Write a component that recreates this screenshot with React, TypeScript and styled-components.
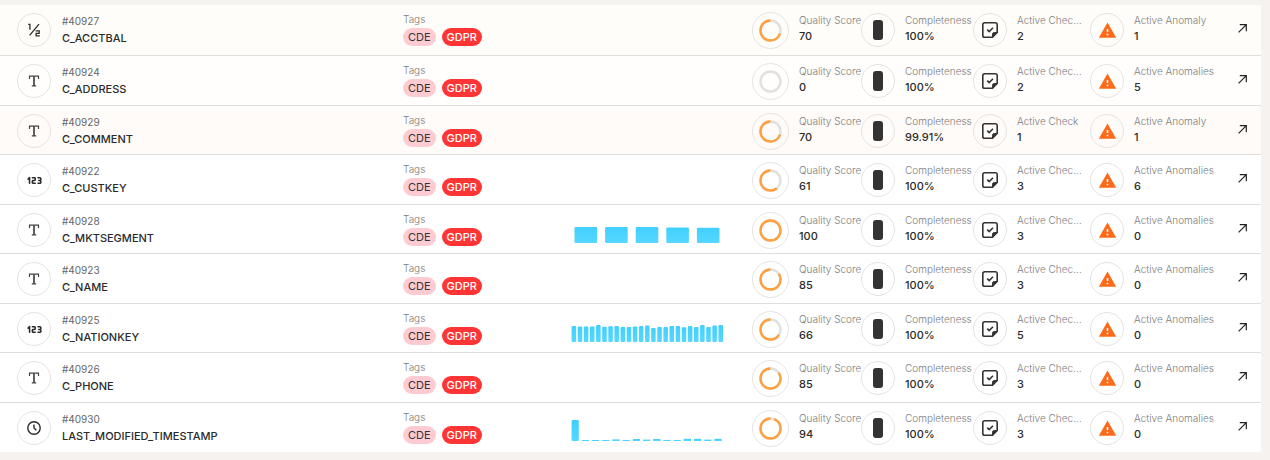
import React from 'react';
import styled, { createGlobalStyle } from 'styled-components';
import { MdWarning } from 'react-icons/md';
import { TbNumber123 } from 'react-icons/tb';

type FieldType = 'decimal' | 'text' | 'integer' | 'time';

interface Field {
  id: number;
  name: string;
  type: FieldType;
  quality: number;
  completeness: string;
  checks: number;
  anomalies: number;
  tint?: string;
  bars?: number[];
}

const fields: Field[] = [
  { id: 40927, name: 'C_ACCTBAL', type: 'decimal', quality: 70, completeness: '100%', checks: 2, anomalies: 1, tint: '#fffdf9' },
  { id: 40924, name: 'C_ADDRESS', type: 'text', quality: 0, completeness: '100%', checks: 2, anomalies: 5, tint: '#fffefc' },
  { id: 40929, name: 'C_COMMENT', type: 'text', quality: 70, completeness: '99.91%', checks: 1, anomalies: 1, tint: '#fffbf8' },
  { id: 40922, name: 'C_CUSTKEY', type: 'integer', quality: 61, completeness: '100%', checks: 3, anomalies: 6 },
  { id: 40928, name: 'C_MKTSEGMENT', type: 'text', quality: 100, completeness: '100%', checks: 3, anomalies: 0, bars: [16, 16, 16, 15.6, 15.2] },
  { id: 40923, name: 'C_NAME', type: 'text', quality: 85, completeness: '100%', checks: 3, anomalies: 0 },
  {
    id: 40925, name: 'C_NATIONKEY', type: 'integer', quality: 66, completeness: '100%', checks: 5, anomalies: 0,
    bars: [16, 15.4, 15.6, 15.6, 17, 15.2, 15.8, 16, 15, 15, 15.6, 16, 16.6, 14, 15, 15, 16, 16, 14.8, 16, 15, 17, 15, 16.4, 17],
  },
  { id: 40926, name: 'C_PHONE', type: 'text', quality: 85, completeness: '100%', checks: 3, anomalies: 0 },
  {
    id: 40930, name: 'LAST_MODIFIED_TIMESTAMP', type: 'time', quality: 94, completeness: '100%', checks: 3, anomalies: 0,
    bars: [21, 1, 1, 1, 1.6, 1, 2, 1.4, 2, 1, 1, 2.2, 2.2, 1.4, 2.2],
  },
];

const GlobalStyle = createGlobalStyle`
  *, *::before, *::after { box-sizing: border-box; }
  body {
    margin: 0;
    background: #f6f2ef;
    color: #2b2b2b;
    font-family: Inter, "Liberation Sans", sans-serif;
  }
`;

const Page = styled.main`
  padding: 5px 9px 8px 0;
`;

const FieldList = styled.ul`
  margin: 0;
  padding: 0;
  list-style: none;
  overflow: hidden;
  border-radius: 0 3px 3px 0;
  background: #fff;
`;

const FieldRow = styled.li<{ $tint?: string }>`
  display: grid;
  grid-template-columns: minmax(230px, 1fr) 168px 181px 109px 112px 117px 143px 19px;
  align-items: start;
  min-height: 49px;
  padding: 7px 9px 0 17px;
  border-bottom: 1px solid #dedede;
  background: ${({ $tint }) => $tint ?? '#fff'};

  &:nth-child(even) { min-height: 50px; }
  &:first-child { min-height: 51px; }
  &:last-child { border-bottom: 0; }
`;

const Identity = styled.div`
  display: flex;
  gap: 11px;
`;

const Circle = styled.span<{ $large?: boolean }>`
  display: flex;
  flex: none;
  align-items: center;
  justify-content: center;
  width: ${({ $large }) => ($large ? 37 : 34)}px;
  height: ${({ $large }) => ($large ? 37 : 34)}px;
  margin-top: ${({ $large }) => ($large ? 0 : 1)}px;
  border: 1px solid #e5e3e2;
  border-radius: 50%;
`;

const IdentityText = styled.div`
  padding-top: 1px;
`;

const FieldId = styled.div`
  color: #666;
  font-size: 10px;
  line-height: 16px;
`;

const FieldName = styled.div`
  font-size: 11px;
  font-weight: 500;
  line-height: 18px;
  white-space: nowrap;
`;

const MetricLabel = styled.div`
  overflow: hidden;
  color: #7c7c7c;
  font-size: 10px;
  font-weight: 300;
  line-height: 14px;
  text-overflow: ellipsis;
  white-space: nowrap;
`;

const TagList = styled.div`
  display: flex;
  gap: 6px;
  padding-top: 2px;
`;

const Tag = styled.span<{ $strong?: boolean }>`
  padding: 0 5px;
  border-radius: 9px;
  background: ${({ $strong }) => ($strong ? '#ff3434' : '#ffcbd2')};
  color: ${({ $strong }) => ($strong ? '#fff' : '#333')};
  font-size: 11px;
  font-weight: ${({ $strong }) => ($strong ? 500 : 400)};
  line-height: 18px;
`;

const Chart = styled.svg`
  display: block;
  width: 152px;
  height: 24px;
  margin-top: 7px;
`;

const Metric = styled.div`
  display: flex;
  gap: 10px;
`;

const MetricText = styled.div<{ $width: number }>`
  width: ${({ $width }) => $width}px;
  padding-top: 1px;
`;

const MetricValue = styled.div`
  font-size: 11px;
  font-weight: 500;
  line-height: 18px;
`;

const Fill = styled.span`
  width: 10px;
  height: 20px;
  border-radius: 3px;
  background: #333;
`;

const OpenLink = styled.a`
  display: flex;
  justify-content: center;
  padding: 12px 0;
  color: #222;
`;

function TypeIcon({ type }: { type: FieldType }) {
  if (type === 'text') {
    return (
      <svg width="12" height="12" viewBox="0 0 12 12" fill="none" stroke="#444" strokeWidth="1.2">
        <path d="M1.5 4V1.2h9V4M3.8 10.9h4.4" />
        <path d="M6 1.2v9.7" strokeWidth="1.7" />
      </svg>
    );
  }
  if (type === 'integer') return <TbNumber123 size={17} strokeWidth={2.2} />;
  if (type === 'time') {
    return (
      <svg width="14" height="14" viewBox="0 0 14 14" fill="none" stroke="currentColor" strokeWidth="1.4">
        <circle cx="7" cy="7" r="6.2" />
        <path d="M7 3.5V7l2.3 2.3" />
      </svg>
    );
  }
  return (
    <svg width="14" height="16" viewBox="0 0 14 16" fill="none" stroke="currentColor" strokeWidth="1.3">
      <path d="M1.2 2.4h1.7v5.4M12 2.2 2.6 13.4M8.6 8.8h3.6v2.5H9.1v2.6h3.7" />
    </svg>
  );
}

function ScoreRing({ value }: { value: number }) {
  return (
    <svg width="23" height="23" viewBox="0 0 23 23" fill="none" strokeWidth="2.4">
      <circle cx="11.5" cy="11.5" r="10" stroke="#e2e0df" />
      {value > 0 && (
        <circle
          cx="11.5"
          cy="11.5"
          r="10"
          stroke="#ffa040"
          pathLength={100}
          strokeDasharray={`${value} ${100 - value}`}
          transform="matrix(0 -1 -1 0 23 23)"
        />
      )}
    </svg>
  );
}

function CheckNoteIcon() {
  return (
    <svg width="16" height="16" viewBox="0 0 16 16" fill="none" stroke="#333" strokeWidth="1.6">
      <path d="M10.5 15.2H2.6A1.8 1.8 0 0 1 .8 13.4V2.6A1.8 1.8 0 0 1 2.6.8h10.8a1.8 1.8 0 0 1 1.8 1.8v7.9z" />
      <path d="M10.5 15.2v-2.9a1.8 1.8 0 0 1 1.8-1.8h2.9z" fill="#333" strokeWidth="1" />
      <path d="m5.2 7.6 2 2 3.8-3.8" />
    </svg>
  );
}

function OpenIcon() {
  return (
    <svg width="9" height="9" viewBox="0 0 9 9" fill="none" stroke="currentColor" strokeWidth="1.2">
      <path d="M.6 8.4 8.3.7M1.8.7h6.5v6.5" />
    </svg>
  );
}

function Histogram({ bars }: { bars: number[] }) {
  const pitch = 153 / bars.length;
  const gap = bars.length < 10 ? 8 : bars.length < 20 ? 3 : 1.6;
  return (
    <Chart viewBox="0 0 152 24" role="img" aria-label="Value distribution">
      <defs>
        <linearGradient id="bar" x1="0" y1="0" x2="0" y2="1">
          <stop offset="0" stopColor="#40d0ff" />
          <stop offset="1" stopColor="#57d7ff" />
        </linearGradient>
      </defs>
      {bars.map((height, i) => (
        <rect
          key={i}
          x={i * pitch + (bars.length < 10 ? 3.5 : 0.6)}
          y={24 - height}
          width={pitch - gap}
          height={height}
          rx={height > 3 ? 1 : 0}
          fill="url(#bar)"
        />
      ))}
    </Chart>
  );
}

interface StatProps {
  label: string;
  value: React.ReactNode;
  icon: React.ReactNode;
  width: number;
  large?: boolean;
}

function Stat({ label, value, icon, width, large }: StatProps) {
  return (
    <Metric>
      <Circle $large={large}>{icon}</Circle>
      <MetricText $width={width}>
        <MetricLabel>{label}</MetricLabel>
        <MetricValue>{value}</MetricValue>
      </MetricText>
    </Metric>
  );
}

export default function App() {
  return (
    <>
      <GlobalStyle />
      <Page>
        <FieldList>
          {fields.map((field) => (
            <FieldRow key={field.id} $tint={field.tint}>
              <Identity>
                <Circle><TypeIcon type={field.type} /></Circle>
                <IdentityText>
                  <FieldId>#{field.id}</FieldId>
                  <FieldName>{field.name}</FieldName>
                </IdentityText>
              </Identity>
              <div>
                <MetricLabel>Tags</MetricLabel>
                <TagList>
                  <Tag>CDE</Tag>
                  <Tag $strong>GDPR</Tag>
                </TagList>
              </div>
              <div>{field.bars && <Histogram bars={field.bars} />}</div>
              <Stat large width={64} label="Quality Score" value={field.quality} icon={<ScoreRing value={field.quality} />} />
              <Stat width={68} label="Completeness" value={field.completeness} icon={<Fill />} />
              <Stat width={65} label={field.checks === 1 ? 'Active Check' : 'Active Checks'} value={field.checks} icon={<CheckNoteIcon />} />
              <Stat
                width={88}
                label={field.anomalies === 1 ? 'Active Anomaly' : 'Active Anomalies'}
                value={field.anomalies}
                icon={<MdWarning size={19} color="#ff6a1a" />}
              />
              <OpenLink href="#" aria-label={`Open ${field.name}`}>
                <OpenIcon />
              </OpenLink>
            </FieldRow>
          ))}
        </FieldList>
      </Page>
    </>
  );
}
